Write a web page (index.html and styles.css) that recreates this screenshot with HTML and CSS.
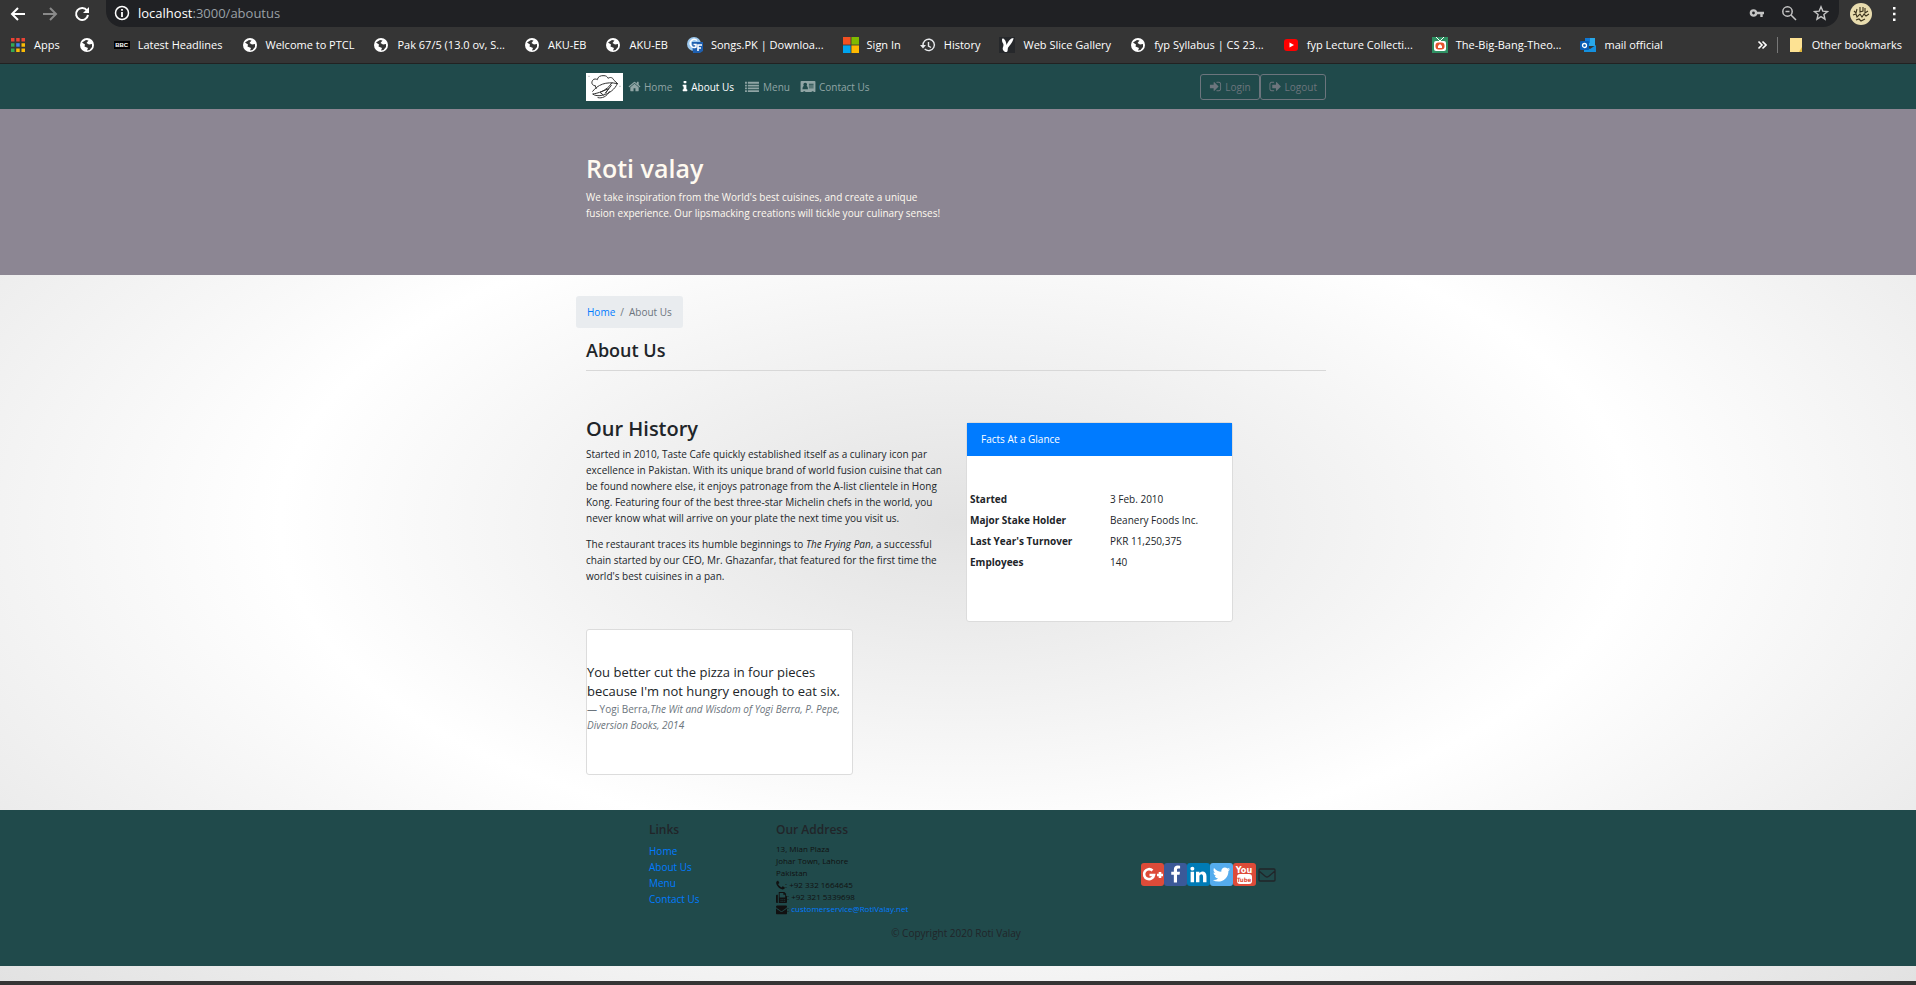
FILE: index.html
```html
<!DOCTYPE html>
<html lang="en">
<head>
<meta charset="utf-8">
<title>Roti valay</title>
<link rel="stylesheet" href="styles.css">
</head>
<body>
<svg class="defs" aria-hidden="true">
  <symbol id="globe" viewBox="0 0 16 16"><circle cx="8" cy="8" r="7" fill="#fff"/><path d="M3 5.500L7 3l2.500.500L7.500 6 10 7.500l3-.5v3L10.500 13 8 13.500l1-2.500L5.500 9.500 6 7.500z" fill="#353535"/></symbol>
</svg>

<header class="chrome">
  <div class="toolbar">
    <button class="tool" aria-label="Back"><svg viewBox="0 0 16 16"><path d="M15 8H2M8 2L2 8l6 6" class="line"/></svg></button>
    <button class="tool dim" aria-label="Forward"><svg viewBox="0 0 16 16"><path d="M1 8h13M8 2l6 6-6 6" class="line"/></svg></button>
    <button class="tool" aria-label="Reload"><svg viewBox="0 0 16 16"><path d="M13 4.500A6 6 0 1 0 14 9" class="line"/><path d="M15 1v6H9z" fill="currentColor"/></svg></button>
    <div class="address">
      <svg class="i16" viewBox="0 0 16 16"><circle cx="8" cy="8" r="6.500" fill="none" stroke="#fff" stroke-width="1.500"/><path d="M8 7v5M8 4v1.800" stroke="#fff" stroke-width="1.800"/></svg>
      <span class="url"><b>localhost</b>:3000/aboutus</span>
      <span class="address-tools">
        <svg class="i16" viewBox="0 0 16 16"><circle cx="4.500" cy="8" r="2.600" fill="none" stroke="currentColor" stroke-width="2.400"/><path d="M7 8h8M12.500 8v4" stroke="currentColor" stroke-width="2.400"/></svg>
        <svg class="i16" viewBox="0 0 16 16"><circle cx="6.500" cy="6.500" r="4.700" fill="none" stroke="currentColor" stroke-width="1.500"/><path d="M10 10l5 5M4.500 6.500h4" stroke="currentColor" stroke-width="1.500"/></svg>
        <svg class="i16" viewBox="0 0 16 16"><path d="M8 1.800l1.800 4.300 4.700.4-3.600 3 1.100 4.700-4-2.500-4 2.500 1.100-4.700-3.600-3 4.700-.4z" fill="none" stroke="currentColor" stroke-width="1.400"/></svg>
      </span>
    </div>
    <svg class="avatar" viewBox="0 0 22 22"><circle cx="11" cy="11" r="11" fill="#e8dcae"/><path d="M4 8l2 2 1-4m3-2v5l3-1V4m2 1v5l3-2M3 12l3-1 1 3 3-3 2 3 2-3 2 2 3-2M6 17l3-1 2 2 4-2" fill="none" stroke="#3a321c" stroke-width="1.100"/></svg>
    <button class="tool more" aria-label="More"><svg viewBox="0 0 16 16"><path d="M7 1h2.500v2.500H7zM7 6.700h2.500v2.500H7zM7 12.500h2.500V15H7z" fill="currentColor"/></svg></button>
  </div>
  <nav class="bookmarks" aria-label="Bookmarks">
    <a href="#"><svg class="i16" viewBox="0 0 16 16"><path d="M1 1h3.500v3.500H1zM6.200 1h3.500v3.500H6.200zM11.500 1H15v3.500h-3.500z" fill="#ea4335"/><path d="M1 6.200h3.500v3.500H1z" fill="#34a853"/><path d="M6.200 6.200h3.500v3.500H6.200z" fill="#4285f4"/><path d="M11.500 6.200H15v3.500h-3.500zM6.200 11.500h3.500V15H6.200zM11.500 11.500H15V15h-3.500z" fill="#fbbc05"/><path d="M1 11.500h3.500V15H1z" fill="#34a853"/></svg>Apps</a>
    <a href="#" aria-label="Page"><svg class="i16"><use href="#globe"/></svg></a>
    <a href="#"><span class="bbc">BBC</span>Latest Headlines</a>
    <a href="#"><svg class="i16"><use href="#globe"/></svg>Welcome to PTCL</a>
    <a href="#"><svg class="i16"><use href="#globe"/></svg>Pak 67/5 (13.0 ov, S...</a>
    <a href="#"><svg class="i16"><use href="#globe"/></svg>AKU-EB</a>
    <a href="#"><svg class="i16"><use href="#globe"/></svg>AKU-EB</a>
    <a href="#"><svg class="i16" viewBox="0 0 16 16"><circle cx="7" cy="7" r="7" fill="#9cc8ee"/><path d="M5 5h11v9l-3 2H6z" fill="#1f5fae"/><path d="M10 3.500A4 4 0 1 0 9 10V7.500H6.500M11 14V8h4m-4 3h3" fill="none" stroke="#fff" stroke-width="1.600"/></svg>Songs.PK | Downloa...</a>
    <a href="#"><svg class="i16" viewBox="0 0 16 16"><path d="M0 0h7.600v7.600H0z" fill="#f25022"/><path d="M8.400 0H16v7.600H8.400z" fill="#7fba00"/><path d="M0 8.400h7.600V16H0z" fill="#00a4ef"/><path d="M8.400 8.400H16V16H8.400z" fill="#ffb900"/></svg>Sign In</a>
    <a href="#"><svg class="i16" viewBox="0 0 16 16"><path d="M3 8.500A5.700 5.700 0 1 1 4.700 12M8.500 5v4l2.500 1.500" fill="none" stroke="#e8eaed" stroke-width="1.400"/><path d="M0 8h6l-3 3.500z" fill="#e8eaed"/></svg>History</a>
    <a href="#"><svg class="i16" viewBox="0 0 16 16"><path d="M0 0h16v16H0z" fill="#26282b"/><path d="M7.500 8C7 2 3 0 3 3s1.500 3 1.500 5S3 11 4 13s4 3 4.500 1 0-3 1-4 5-6 5-9c-3 0-5 3-7 7z" fill="#fff"/></svg>Web Slice Gallery</a>
    <a href="#"><svg class="i16"><use href="#globe"/></svg>fyp Syllabus | CS 23...</a>
    <a href="#"><svg class="i16" viewBox="0 0 16 16"><rect x="1" y="2" width="14" height="12" rx="3" fill="#f00"/><path d="M6.500 5.500v5L11 8z" fill="#fff"/></svg>fyp Lecture Collecti...</a>
    <a href="#"><svg class="i16" viewBox="0 0 16 16"><path d="M0 0h16v16H0z" fill="#2f9163"/><path d="M4 0l4 4 4-4" fill="none" stroke="#fff"/><rect x="2" y="4" width="12" height="10" rx="2" fill="#fff"/><rect x="3.500" y="5.500" width="9" height="7" rx="3" fill="#e5532d"/><path d="M6 9l2-2 2 2v2H6z" fill="#fff"/></svg>The-Big-Bang-Theo...</a>
    <a href="#"><svg class="i16" viewBox="0 0 16 16"><path d="M5 1h10v8H5z" fill="#28a8ea"/><path d="M5 1h5v5H5z" fill="#0f78d4"/><path d="M4 8l6 4 6-4v7H4z" fill="#1490df"/><rect y="4" width="9" height="9" rx="1" fill="#0a5cb5"/><circle cx="4.500" cy="8.500" r="2" fill="none" stroke="#fff" stroke-width="1.300"/></svg>mail official</a>
    <span class="overflow"><a href="#" aria-label="More bookmarks"><svg class="i10" viewBox="0 0 10 10"><path d="M1.500 1.500L5 5 1.500 8.500M5.500 1.500L9 5 5.500 8.500" fill="none" stroke="#fff" stroke-width="1.600"/></svg></a>
    <a class="other" href="#"><svg class="i16" viewBox="0 0 16 16"><path d="M2 1h12v11.500L12 15H2z" fill="#fde293"/><path d="M14 10v5h-3z" fill="#e2b93b"/></svg>Other bookmarks</a></span>
  </nav>
</header>

<div class="page">
  <div class="navbar">
    <div class="container navrow">
      <a class="brand" href="#" aria-label="Roti valay"><svg viewBox="0 0 111 84"><path fill="#fff" d="M0 0h111v84H0z"/><g fill="none" stroke="#333" stroke-width="3" stroke-linecap="round" stroke-linejoin="round"><path d="M27 38C18 38 15 29 20 22c4-6 11-4 14-2 1-9 10-13 20-12 6 0 10 3 12 8 7-5 15-2 17 5l12 11"/><path d="M27 38l4 8M20 55C34 36 60 24 94 32c-7 16-24 30-42 34-14 4-26 2-32-3 14-2 42-8 58-34M52 66L42 58l26-11-10 14 18-24M36 74c12 3 26-3 34-18"/></g><path d="M7 10h4M100 40h4" stroke="#bbb" stroke-width="4"/></svg></a>
      <nav class="links" aria-label="Main">
        <a href="#"><svg class="fa" viewBox="0 0 1792 1792"><path d="M1472 992v480q0 26-19 45t-45 19h-384v-384h-256v384h-384q-26 0-45-19t-19-45v-480q0-1 .5-3t.5-3l575-474 575 474q1 2 1 6zm223-69l-62 74q-8 9-21 11h-3q-13 0-21-7l-692-577-692 577q-12 8-24 7-13-2-21-11l-62-74q-8-10-7-23.500t11-21.500l719-599q32-26 76-26t76 26l244 204v-195q0-14 9-23t23-9h192q14 0 23 9t9 23v408l219 182q10 8 11 21.500t-7 23.500z"/></svg>Home</a>
        <a class="active" href="#"><svg class="fa slim" viewBox="576 0 640 1792"><path d="M1216 1344v128q0 26-19 45t-45 19h-512q-26 0-45-19t-19-45v-128q0-26 19-45t45-19h64v-384h-64q-26 0-45-19t-19-45v-128q0-26 19-45t45-19h384q26 0 45 19t19 45v576h64q26 0 45 19t19 45zm-128-1152v192q0 26-19 45t-45 19h-256q-26 0-45-19t-19-45v-192q0-26 19-45t45-19h256q26 0 45 19t19 45z"/></svg>About Us</a>
        <a href="#"><svg class="fa wide" viewBox="0 0 15 14"><path d="M0 2h2v2H0zM3 2h12v2H3zM0 5h2v2H0zM3 5h12v2H3zM0 8h2v2H0zM3 8h12v2H3zM0 11h2v2H0zM3 11h12v2H3z"/></svg>Menu</a>
        <a href="#"><svg class="fa wide" viewBox="0 0 16 14"><path fill-rule="evenodd" d="M1 1h14q1 0 1 1v10q0 1-1 1h-1v-1h-2v1H5v-1H3v1H1q-1 0-1-1V2q0-1 1-1zM5 3a2 2 0 0 0-1.500 3.300Q2 7 2 10h6q0-3-1.500-3.700A2 2 0 0 0 5 3zM9 4v1h5V4zM9 6v1h5V6zM9 8v1h5V8z"/></svg>Contact Us</a>
      </nav>
      <div class="auth">
        <button><svg class="fa" viewBox="0 0 1792 1792"><path d="M1312 896q0 26-19 45l-544 544q-19 19-45 19t-45-19-19-45v-288h-448q-26 0-45-19t-19-45v-384q0-26 19-45t45-19h448v-288q0-26 19-45t45-19 45 19l544 544q19 19 19 45zm352-352v704q0 119-84.500 203.500t-203.500 84.500h-320q-13 0-22.500-9.500t-9.500-22.500q0-4-1-20t-.5-26.500 3-23.500 10-19.500 20.500-6.500h320q66 0 113-47t47-113v-704q0-66-47-113t-113-47h-312l-11.500-1-11.500-3-8-5.500-7-9-2-13.500q0-4-1-20t-.5-26.500 3-23.500 10-19.500 20.500-6.500h320q119 0 203.500 84.500t84.500 203.500z"/></svg>Login</button>
        <button><svg class="fa" viewBox="0 0 1792 1792"><path d="M704 1440q0 4 1 20t.5 26.500-3 23.500-10 19.500-20.500 6.500h-320q-119 0-203.500-84.500t-84.500-203.500v-704q0-119 84.500-203.500t203.500-84.500h320q13 0 22.500 9.500t9.500 22.500q0 4 1 20t.5 26.500-3 23.500-10 19.500-20.500 6.500h-320q-66 0-113 47t-47 113v704q0 66 47 113t113 47h312l11.500 1 11.500 3 8 5.500 7 9 2 13.500zm928-544q0 26-19 45l-544 544q-19 19-45 19t-45-19-19-45v-288h-448q-26 0-45-19t-19-45v-384q0-26 19-45t45-19h448v-288q0-26 19-45t45-19 45 19l544 544q19 19 19 45z"/></svg>Logout</button>
      </div>
    </div>
  </div>

  <section class="jumbotron">
    <div class="container">
      <h1>Roti valay</h1>
      <p>We take inspiration from the World's best cuisines, and create a unique fusion experience. Our lipsmacking creations will tickle your culinary senses!</p>
    </div>
  </section>

  <main class="container content">
    <nav class="breadcrumb" aria-label="Breadcrumb"><a href="#">Home</a><span>/</span><span>About Us</span></nav>
    <h3>About Us</h3>
    <hr>
    <div class="about">
      <section class="history">
        <h2>Our History</h2>
        <p>Started in 2010, Taste Cafe quickly established itself as a culinary icon par excellence in Pakistan. With its unique brand of world fusion cuisine that can be found nowhere else, it enjoys patronage from the A-list clientele in Hong Kong. Featuring four of the best three-star Michelin chefs in the world, you never know what will arrive on your plate the next time you visit us.</p>
        <p>The restaurant traces its humble beginnings to <em>The Frying Pan</em>, a successful chain started by our CEO, Mr. Ghazanfar, that featured for the first time the world's best cuisines in a pan.</p>
      </section>
      <section class="card facts">
        <div class="card-head">Facts At a Glance</div>
        <table>
          <tr><th scope="row">Started</th><td>3 Feb. 2010</td></tr>
          <tr><th scope="row">Major Stake Holder</th><td>Beanery Foods Inc.</td></tr>
          <tr><th scope="row">Last Year's Turnover</th><td>PKR 11,250,375</td></tr>
          <tr><th scope="row">Employees</th><td>140</td></tr>
        </table>
      </section>
    </div>
    <blockquote class="card quote">
      <p>You better cut the pizza in four pieces because I'm not hungry enough to eat six.</p>
      <footer>— Yogi Berra,<cite>The Wit and Wisdom of Yogi Berra, P. Pepe, Diversion Books, 2014</cite></footer>
    </blockquote>
  </main>

  <footer class="footer">
    <div class="container">
      <div class="footer-cols">
        <div>
          <h5>Links</h5>
          <ul><li><a href="#">Home</a></li><li><a href="#">About Us</a></li><li><a href="#">Menu</a></li><li><a href="#">Contact Us</a></li></ul>
        </div>
        <div>
          <h5>Our Address</h5>
          <address>
            13, Mian Plaza<br>Johar Town, Lahore<br>Pakistan<br>
            <span><svg class="fb phone" viewBox="192 0 1408 1792"><path d="M1600 1240q0 27-10 70.500t-21 68.500q-21 50-122 106-94 51-186 51-27 0-52.500-3.500t-57.500-12.500-47.500-14.500-55.500-20.500-49-18q-98-35-175-83-128-79-264.500-215.500t-215.500-264.500q-48-77-83-175-3-9-18-49t-20.500-55.500-14.500-47.500-12.500-57.500-3.500-52.500q0-92 51-186 56-101 106-122 25-11 68.500-21t70.500-10q14 0 21 3 18 6 53 76 11 19 30 54t35 63.500 31 53.500q3 4 17.500 25t21.500 35.500 7 28.500q0 20-28.500 50t-62 55-62 53-28.500 46q0 9 5 22.500t8.500 20.500 14 24 11.500 19q76 137 174 235t235 174q2 1 19 11.500t24 14 20.500 8.500 22.500 5q18 0 46-28.500t53-62 55-62 50-28.500q14 0 28.500 7t35.500 21.500 25 17.500q25 15 53.500 31t63.500 35 54 30q70 35 76 53 3 7 3 21z"/></svg>: +92 332 1664645</span>
            <span><svg class="fb" viewBox="0 0 12 12"><path fill-rule="evenodd" d="M0 4q0-1 1-1h1v9H1q-1 0-1-1zM3 0h6l2 2v2q1 0 1 1v6q0 1-1 1H3zM4 1v5h6V3H8V1zM5 8v1h1V8zM7 8v1h1V8zM9 8v1h1V8zM5 10v1h1v-1zM7 10v1h1v-1zM9 10v1h1v-1z"/></svg>: +92 321 5339698</span>
            <span><svg class="fb" viewBox="0 0 1792 1792"><path d="M1792 710v794q0 66-47 113t-113 47h-1472q-66 0-113-47t-47-113v-794q44 49 101 87 362 246 497 345 57 42 92.500 65.500t94.500 48 110 24.500h2q51 0 110-24.500t94.500-48 92.500-65.500q170-123 498-345 57-39 100-87zm0-294q0 79-49 151t-122 123q-376 261-468 325-10 7-42.500 31t-54 38.500-52 32.500-57.500 27-50 9h-2q-23 0-50-9t-57.500-27-52-32.500-54-38.500-42.500-31q-91-64-262-182.500t-205-142.500q-62-42-117-115.500t-55-136.500q0-78 41.500-130t118.500-52h1472q65 0 112.500 47t47.500 113z"/></svg>: <a href="#">customerservice@RotiValay.net</a></span>
          </address>
        </div>
        <div class="social">
          <a class="google" href="#" aria-label="Google+"><svg viewBox="0 0 23 23"><path d="M11.500 7.500A5 5 0 1 0 13 12H8.500M16 12H22M19 9v6" fill="none" stroke="#fff" stroke-width="2.600"/></svg></a>
          <a class="facebook" href="#" aria-label="Facebook"><svg viewBox="-230 -250 2250 2250"><path fill="#fff" d="M1343 12v264h-157q-86 0-116 36t-30 108v189h293l-39 296h-254v759h-306v-759h-255v-296h255v-218q0-186 104-288.500t277-102.500q147 0 228 12z"/></svg></a>
          <a class="linkedin" href="#" aria-label="LinkedIn"><svg viewBox="-200 -220 2200 2200"><path fill="#fff" d="M477 625v991h-330v-991h330zm21-306q1 73-50.500 122t-135.500 49h-2q-82 0-132-49t-50-122q0-74 51.500-122.500t134.500-48.500 133 48.500 51 122.500zm1166 729v568h-329v-530q0-105-40.500-164.500t-126.500-59.500q-63 0-105.500 34.500t-63.500 85.500q-11 30-11 81v553h-329q2-399 2-647t-1-296l-1-48h329v144h-2q20-32 41-56t56.500-52 87-43.500 114.500-15.500q171 0 275 113.500t104 332.500z"/></svg></a>
          <a class="twitter" href="#" aria-label="Twitter"><svg viewBox="-150 -150 2092 2092"><path fill="#fff" d="M1684 408q-67 98-162 167 1 14 1 42 0 130-38 259.500t-115.500 248.500-184.500 210.500-258 146-323 54.500q-271 0-496-145 35 4 78 4 225 0 401-138-105-2-188-64.500t-114-159.500q33 5 61 5 43 0 85-11-112-23-185.500-111.500t-73.500-205.500v-4q68 38 146 41-66-44-105-115t-39-154q0-88 44-163 121 149 294.500 238.500t371.500 99.500q-8-38-8-74 0-134 94.500-228.500t228.500-94.500q140 0 236 102 109-21 205-78-37 115-142 178 93-10 186-50z"/></svg></a>
          <a class="youtube" href="#" aria-label="YouTube"><svg viewBox="0 0 23 23"><text x="11" y="10" class="yt">You</text><rect x="4" y="11" width="15" height="10" rx="3" fill="#fff"/><text x="11" y="19" class="yt red">Tube</text></svg></a>
          <a class="mail" href="#" aria-label="Email"><svg viewBox="0 0 18 18"><path d="M2 3h14q1 0 1 1v10q0 1-1 1H2q-1 0-1-1V4q0-1 1-1zM1 5l6.500 5.500q1.500 1 3 0L17 5" fill="none" stroke="#212529" stroke-width="1.300"/></svg></a>
        </div>
      </div>
      <p class="copyright">© Copyright 2020 Roti Valay</p>
    </div>
  </footer>
</div>
</body>
</html>
```
FILE: styles.css
```css
* { box-sizing: border-box; }
body {
  margin: 0;
  min-height: 100vh;
  display: flex;
  flex-direction: column;
  font: 10px/16px "Open Sans", "Noto Sans", sans-serif;
  color: #212529;
  background: #353535;
}
a { color: #007bff; text-decoration: none; }
p, h1, h2, h3, h5, ul, blockquote { margin: 0; padding: 0; }
ul { list-style: none; }
button { font: inherit; background: none; cursor: pointer; }
.defs { display: none; }
.i16 { width: 16px; height: 16px; flex: none; }
.i10 { width: 10px; height: 10px; }
.line { fill: none; stroke: currentColor; stroke-width: 2; }

/* browser frame */
.chrome { background: #353535; border-bottom: 1px solid #222; color: #fff; }
.toolbar { display: flex; align-items: center; height: 27px; padding: 0 14px 0 10px; }
.tool { width: 16px; height: 16px; padding: 0; border: 0; margin-right: 16px; color: #fff; flex: none; }
.tool svg { display: block; width: 16px; height: 16px; }
.tool.dim { color: #8a8a8a; }
.tool.more { margin: 0; }
.address {
  flex: 1;
  display: flex;
  align-items: center;
  gap: 8px;
  height: 27px;
  padding: 0 10px 2px 8px;
  background: #202124;
  border-radius: 0 0 16px 16px;
}
.url { font-size: 13px; color: #9aa0a6; }
.url b { font-weight: 400; color: #fff; }
.address-tools { display: flex; gap: 16px; margin-left: auto; color: #c4c4c4; }
.avatar { width: 22px; height: 22px; margin: 0 14px 0 11px; }
.bookmarks { display: flex; align-items: center; gap: 19px; height: 36px; padding: 0 14px 0 10px; white-space: nowrap; }
.bookmarks a { display: flex; align-items: center; gap: 8px; color: #fff; font-size: 11px; }
.bbc { width: 16px; background: #000; font: bold 6px/8px "Liberation Sans", sans-serif; text-align: center; }
.overflow { display: flex; align-items: center; gap: 10px; margin-left: auto; }
.other { border-left: 1px solid #777; padding-left: 10px; }

/* page */
.page { background: radial-gradient(ellipse, #e2e2e2 0%, #fff 50%, #e2e2e2 100%); padding-bottom: 15px; }
.container { width: 100%; max-width: 764px; margin: 0 auto; padding: 0 14px 0 10px; }
.fa { width: 13px; height: 13px; fill: currentColor; flex: none; }
.fa.slim { width: 6px; }
.fa.wide { width: 16px; }

.navbar { background: #204a4b; }
.navrow { display: flex; align-items: center; height: 45px; }
.brand svg { display: block; width: 37px; height: 28px; }
.links { display: flex; gap: 10px; margin-left: 5px; }
.links a { display: flex; align-items: center; gap: 3px; color: #90a5a5; }
.links .active { color: #fff; }
.auth { display: flex; margin-left: auto; }
.auth button {
  display: flex;
  align-items: center;
  gap: 3px;
  height: 26px;
  padding: 0 8px;
  color: #6c757d;
  border: 1px solid #6c757d;
  border-radius: 3px;
}
.jumbotron { background: #8c8693; color: floralwhite; padding: 43px 0 50px; }
.jumbotron h1 { font-size: 25px; line-height: 32px; font-weight: 600; margin-bottom: 5px; }
.jumbotron p { max-width: 360px; padding-bottom: 4px; }

.content { padding-bottom: 35px; }
.breadcrumb {
  display: inline-flex;
  gap: 5px;
  margin: 21px 0 0 -10px;
  padding: 8px 11px;
  border-radius: 3px;
  background: #e9ecef;
  color: #6c757d;
}
.content h3 { font-size: 18px; line-height: 22px; font-weight: 600; margin: 11px 0 9px; }
hr { border: 0; border-top: 1px solid #d8d8d8; margin: 0; }
.about { display: grid; grid-template-columns: 360px 267px; gap: 20px; padding-top: 44px; }
.history h2 { font-size: 20px; line-height: 26px; font-weight: 600; margin: 1px 0 4px; }
.history p { margin-bottom: 10px; }
.card { background: #fff; border: 1px solid #dcdcdc; border-radius: 3px; }
.facts { margin-top: 7px; }
.card-head { height: 33px; padding: 8px 14px; background: #007bff; color: #fff; }
.facts table { width: 100%; margin: 32px 0 49px; border-collapse: collapse; }
.facts th { width: 140px; font-weight: 700; text-align: left; }
.facts th, .facts td { height: 21px; padding: 0 3px; }
.quote { width: 267px; margin-top: 7px; padding: 33px 0 41px; }
.quote p { font-size: 13px; line-height: 19px; }
.quote footer { color: #6c757d; }

.footer { background: #204a4b; }
.footer .container { padding-top: 12px; padding-bottom: 25px; }
.footer-cols { display: grid; grid-template-columns: 127px 304px 1fr; padding-left: 63px; }
.footer h5 { font-size: 12px; line-height: 16px; font-weight: 600; margin-bottom: 5px; }
address { font-size: 8px; line-height: 12px; font-style: normal; color: #111; }
address span { display: flex; align-items: center; height: 12px; white-space: pre; }
.fb { width: 11px; height: 11px; fill: #111; }
.fb.phone { width: 9px; }
.social { display: flex; align-items: center; align-self: center; padding-left: 61px; margin-top: 12px; }
.social svg { display: block; width: 23px; height: 23px; border-radius: 3px; }
.social .mail svg { width: 18px; height: 18px; margin-left: 2px; border-radius: 0; }
.google svg { background: #dd4b39; }
.facebook svg { background: #3b5998; }
.linkedin svg { background: #007bb6; }
.twitter svg { background: #55acee; }
.youtube svg { background: #dd4b39; }
.yt { font: bold 9px "DejaVu Sans Condensed", sans-serif; text-anchor: middle; fill: #fff; }
.yt.red { font-size: 6px; fill: #dd4b39; }
.copyright { text-align: center; padding-top: 10px; }
```
